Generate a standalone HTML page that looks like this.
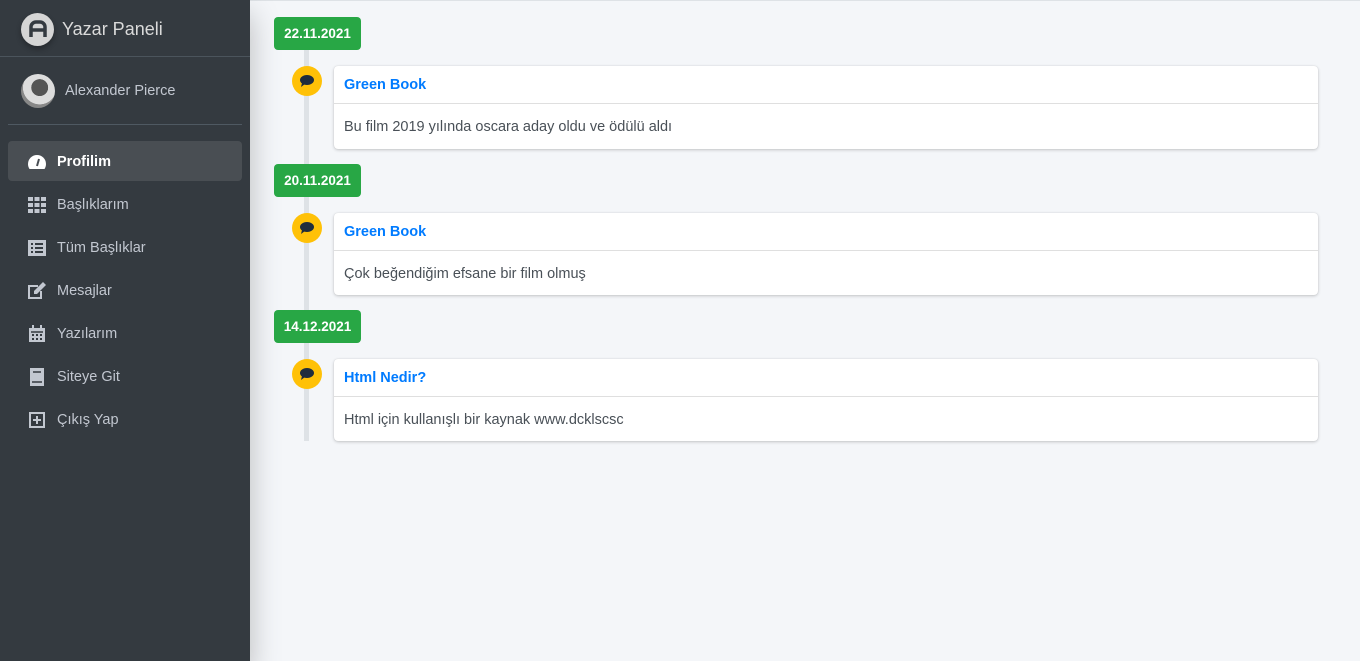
<!DOCTYPE html>
<html><head><meta charset="utf-8"><style>
*{box-sizing:border-box;margin:0;padding:0}
body{width:1360px;height:661px;overflow:hidden;font-family:"Liberation Sans",sans-serif;background:#f4f6f9;position:relative}
.sb{position:absolute;left:0;top:0;width:250px;height:661px;background:#343a40;box-shadow:0 14px 28px rgba(0,0,0,.25)}
.brand{height:57px;border-bottom:1px solid #4b545c;display:flex;align-items:center;padding-left:21px;padding-top:2px}
.logo{width:33px;height:33px;border-radius:50%;background:#d5d5d5;display:flex;align-items:center;justify-content:center;box-shadow:0 3px 6px rgba(0,0,0,.3)}
.brand span{color:#dadada;font-size:18px;margin-left:8px;font-weight:300}
.user{position:absolute;top:74px;left:21px;display:flex;align-items:center}
.av{width:34px;height:34px;border-radius:50%;background:radial-gradient(circle at 55% 40%,#555 0 30%,#ddd 31% 60%,#888 61%)}
.user span{color:#c2c7d0;font-size:14.5px;margin-left:10px}
.hr{position:absolute;top:124px;left:8px;width:234px;border-top:1px solid #4f5962}
.nav{position:absolute;top:141px;left:8px;width:234px}
.it{height:40px;margin-bottom:3px;display:flex;align-items:center;padding-left:19px;padding-top:2px;color:#c2c7d0;font-size:14.5px;border-radius:4px}
.it.a{background:#494e53;color:#fff;font-weight:bold}
.it svg{width:20px;height:18px;margin-right:10px;fill:#c2c7d0}
.it.a svg{fill:#fff}
.line{position:absolute;left:304px;top:48px;width:5px;height:393px;background:#dee2e6}
.date{position:absolute;left:274px;height:33px;width:87px;background:#28a745;color:#fff;font-weight:bold;font-size:13.5px;border-radius:4px;display:flex;align-items:center;justify-content:center}
.ic{position:absolute;left:292px;width:30px;height:30px;border-radius:50%;background:#ffc107;display:flex;align-items:center;justify-content:center}
.card{position:absolute;left:334px;width:984px;height:83px;background:#fff;border-radius:4px;box-shadow:0 0 1px rgba(0,0,0,.125),0 1px 3px rgba(0,0,0,.2)}
.card h3{height:38px;border-bottom:1px solid rgba(0,0,0,.125);font-size:14.5px;color:#007bff;padding:11px 10px 0;font-weight:bold}
.card p{padding:15px 10px;font-size:14.5px;color:#495057}
.top{position:absolute;left:250px;top:0;right:0;border-top:1px solid #dee2e6}
</style></head><body>
<div class="top"></div>
<div class="sb">
<div class="brand"><div class="logo"><svg width="20" height="20" viewBox="0 0 20 20"><path d="M3 18V8a5 5 0 0 1 5-5h4a5 5 0 0 1 5 5v10M3 11h14" stroke="#343a40" stroke-width="3.5" fill="none"/></svg></div><span>Yazar Paneli</span></div>
<div class="user"><div class="av"></div><span>Alexander Pierce</span></div>
<div class="hr"></div>
<div class="nav">
<div class="it a"><svg viewBox="0 0 20 18"><path d="M10 2a9 9 0 0 0-9 9c0 2 .6 3.5 1.5 5h15c.9-1.5 1.5-3 1.5-5a9 9 0 0 0-9-9z"/><path d="M10 13l2-7" stroke="#494e53" stroke-width="2"/></svg>Profilim</div>
<div class="it"><svg viewBox="0 0 20 18"><path d="M1 1h5v4H1zM7.5 1h5v4h-5zM14 1h5v4h-5zM1 7h5v4H1zM7.5 7h5v4h-5zM14 7h5v4h-5zM1 13h5v4H1zM7.5 13h5v4h-5zM14 13h5v4h-5z"/></svg>Başlıklarım</div>
<div class="it"><svg viewBox="0 0 20 18"><path d="M1 1h18v16H1z"/><path d="M4 5h2M8 5h8M4 9h2M8 9h8M4 13h2M8 13h8" stroke="#343a40" stroke-width="2"/></svg>Tüm Başlıklar</div>
<div class="it"><svg viewBox="0 0 20 18"><path d="M1 3h10v2H3v10h10V9h2v8H1z"/><path d="M16 0l3 3-9 9H7V9z"/></svg>Mesajlar</div>
<div class="it"><svg viewBox="0 0 20 18"><path d="M2 3h16v14H2z"/><path d="M5 0h2v3H5zM13 0h2v3h-2z"/><path d="M4 7h12" stroke="#343a40" stroke-width="1.5"/><path d="M5 9h2v2H5zM9 9h2v2H9zM13 9h2v2h-2zM5 13h2v2H5zM9 13h2v2H9zM13 13h2v2h-2z" fill="#343a40"/></svg>Yazılarım</div>
<div class="it"><svg viewBox="0 0 20 18"><path d="M3 0h14v18H3z"/><path d="M6 4h8M5 14h10" stroke="#343a40" stroke-width="1.5"/></svg>Siteye Git</div>
<div class="it"><svg viewBox="0 0 20 18"><path d="M2 1h16v16H2zM4 3v12h12V3z"/><path d="M10 5v8M6 9h8" stroke="#c2c7d0" stroke-width="2"/></svg>Çıkış Yap</div>
</div></div>
<div class="line"></div>
<div class="date" style="top:17px">22.11.2021</div>
<div class="ic" style="top:66px"><svg width="16" height="14" viewBox="0 0 16 14"><ellipse cx="8" cy="6" rx="7" ry="5" fill="#1f2d3d"/><path d="M3 9l-1 4 4-3z" fill="#1f2d3d"/></svg></div>
<div class="card" style="top:66px"><h3>Green Book</h3><p>Bu film 2019 yılında oscara aday oldu ve ödülü aldı</p></div>
<div class="date" style="top:164px">20.11.2021</div>
<div class="ic" style="top:213px"><svg width="16" height="14" viewBox="0 0 16 14"><ellipse cx="8" cy="6" rx="7" ry="5" fill="#1f2d3d"/><path d="M3 9l-1 4 4-3z" fill="#1f2d3d"/></svg></div>
<div class="card" style="top:213px;height:82px"><h3>Green Book</h3><p>Çok beğendiğim efsane bir film olmuş</p></div>
<div class="date" style="top:310px">14.12.2021</div>
<div class="ic" style="top:359px"><svg width="16" height="14" viewBox="0 0 16 14"><ellipse cx="8" cy="6" rx="7" ry="5" fill="#1f2d3d"/><path d="M3 9l-1 4 4-3z" fill="#1f2d3d"/></svg></div>
<div class="card" style="top:359px;height:82px"><h3>Html Nedir?</h3><p>Html için kullanışlı bir kaynak www.dcklscsc</p></div>
</body></html>
